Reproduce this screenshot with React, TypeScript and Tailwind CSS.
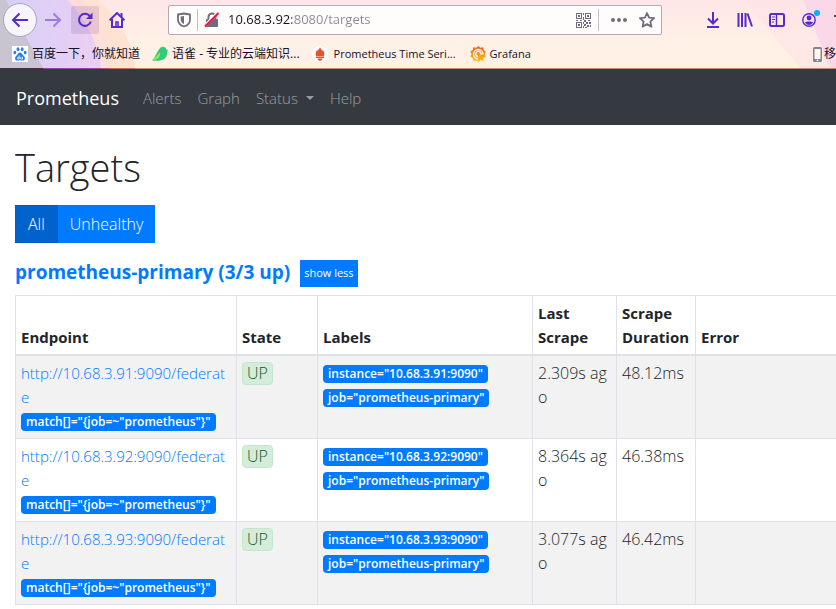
import type { ReactNode } from 'react';
import clsx from 'clsx';

const targets = [
  { host: '10.68.3.91:9090', lastScrape: '2.309s ago', duration: '48.12ms' },
  { host: '10.68.3.92:9090', lastScrape: '8.364s ago', duration: '46.38ms' },
  { host: '10.68.3.93:9090', lastScrape: '3.077s ago', duration: '46.42ms' },
];

const columns = [
  { title: 'Endpoint', width: 'w-[221px]' },
  { title: 'State', width: 'w-[81px]' },
  { title: 'Labels', width: 'w-[215px]' },
  { title: 'Last Scrape', width: 'w-[84px]' },
  { title: 'Scrape Duration', width: 'w-[79px]' },
  { title: 'Error', width: '' },
];

function IconButton({ label, className, children }: { label: string; className?: string; children: ReactNode }) {
  return (
    <button type="button" aria-label={label} className={clsx('flex shrink-0 items-center justify-center', className)}>
      {children}
    </button>
  );
}

// Colour bands of the browser theme
function ThemeBackdrop() {
  return (
    <svg className="absolute inset-0 h-full w-full" viewBox="0 0 836 69" preserveAspectRatio="none" aria-hidden="true">
      <defs>
        <linearGradient id="warm" x1="0" y1="0" x2="0" y2="1">
          <stop offset="0" stopColor="#ffe6e8" />
          <stop offset="0.6" stopColor="#fff0e6" />
          <stop offset="1" stopColor="#fff1e4" />
        </linearGradient>
        <linearGradient id="lilac" x1="0" y1="0" x2="1" y2="0">
          <stop offset="0" stopColor="#d5cff8" />
          <stop offset="1" stopColor="#eccff2" />
        </linearGradient>
        <linearGradient id="peach" x1="0" y1="0" x2="1" y2="0">
          <stop offset="0" stopColor="#fbd0e6" />
          <stop offset="1" stopColor="#ffe0d8" />
        </linearGradient>
      </defs>
      <rect width="836" height="68" fill="url(#warm)" />
      <path d="M0 0H98C122 20 132 44 135 68H0Z" fill="#ffe2d2" />
      <path d="M0 0H82C101 20 109 44 110 68H0Z" fill="url(#peach)" />
      <path d="M0 0H68C86 20 98 44 101 68H0Z" fill="url(#lilac)" />
      <path d="M0 0H6L43 68H0Z" fill="#c8c5d0" />
      <path d="M803 0H836V68H830Z" fill="#fbd8e8" />
      <path d="M745 0H803L830 68H800Z" fill="#ffe3e6" opacity="0.6" />
      <rect y="68" width="836" height="1" fill="#b98f7b" />
      <rect y="68" width="135" height="1" fill="#b9735f" />
      <rect y="68" width="110" height="1" fill="#b0567c" />
      <rect y="68" width="101" height="1" fill="#8a4fa0" />
      <rect y="68" width="43" height="1" fill="#4a3149" />
    </svg>
  );
}

function Toolbar() {
  return (
    <div className="relative flex h-10 items-center text-[#592acb]">
      <IconButton label="Back" className="ml-[3px] size-[34px] rounded-full border border-[#a9a5b4] bg-[#f7f5fc]">
        <svg width="18" height="18" viewBox="0 0 18 18" fill="none" stroke="currentColor" strokeWidth="2">
          <path d="M17 9H2M8.500 2.500 2 9l6.500 6.500" />
        </svg>
      </IconButton>
      <IconButton label="Forward" className="ml-1 size-6 opacity-50">
        <svg width="18" height="18" viewBox="0 0 18 18" fill="none" stroke="currentColor" strokeWidth="2">
          <path d="M1 9h15M9.500 2.500 16 9l-6.500 6.500" />
        </svg>
      </IconButton>
      <IconButton label="Reload" className="ml-1.5 size-7 rounded-xs bg-[#5b2d8a]/15">
        <svg width="16" height="16" viewBox="0 0 16 16" fill="none" stroke="currentColor" strokeWidth="2">
          <path d="M12.800 4.200A6 6 0 1 0 13.800 9.500" />
          <path d="M15.500 0.500V7H9Z" fill="currentColor" stroke="none" />
        </svg>
      </IconButton>
      <IconButton label="Home" className="ml-1 size-7">
        <svg width="16" height="16" viewBox="0 0 16 16" fill="none" stroke="currentColor" strokeWidth="2">
          <path d="M0.500 8.300 8 1l7.500 7.300" />
          <path d="M3 7v8h10V7M12.500 1v4" />
          <path d="M7 15v-5h2v5" strokeWidth="1.500" />
        </svg>
      </IconButton>

      <div className="ml-[37px] flex h-[30px] min-w-0 flex-1 items-center rounded-xs border border-[#b3a9b8] bg-[#fffcfc] text-[#706b7d]">
        <svg className="ml-2 shrink-0" width="14" height="16" viewBox="0 0 14 16" fill="none" stroke="currentColor" strokeWidth="1.800">
          <path d="M7 1.500 13 2.500V7.500C13 11 10.500 13.500 7 14.500C3.500 13.500 1 11 1 7.500V2.500Z" strokeLinejoin="round" />
          <path d="M7 4V12C5 11 3.700 9.500 3.700 7.500V4.600Z" fill="currentColor" stroke="none" />
        </svg>
        <span className="mx-1.5 h-[22px] w-px shrink-0 bg-[#c5bfcb]" />
        <svg className="shrink-0" width="16" height="16" viewBox="0 0 16 16">
          <path d="M4.500 8V5a3.500 3.500 0 0 1 7 0v3" fill="none" stroke="currentColor" strokeWidth="2" />
          <rect x="2" y="7" width="12" height="8" rx="1" fill="currentColor" />
          <path d="M1 13.500 13.500 1" stroke="#fffcfc" strokeWidth="3" />
          <path d="M1 14.500 14.500 1" stroke="#f5124a" strokeWidth="2.200" />
        </svg>
        <input
          type="text"
          aria-label="Address"
          defaultValue="10.68.3.92:8080/targets"
          className="ml-2 min-w-0 flex-1 bg-transparent bg-[linear-gradient(90deg,#15141a_64px,#8c8797_64px)] bg-clip-text text-[13px] text-transparent outline-none"
        />
        <svg className="shrink-0" width="15" height="15" viewBox="0 0 15 15" fill="currentColor" shapeRendering="crispEdges">
          <path fillRule="evenodd" d="M0 0h6v6H0ZM1 1v4h4V1ZM2 2h2v2H2ZM9 0h6v6H9ZM10 1v4h4V1ZM11 2h2v2h-2ZM0 9h6v6H0ZM1 10v4h4v-4ZM2 11h2v2H2Z" />
          <path d="M7 0h1v2H7ZM7 4h1v3H7ZM0 7h2v1H0ZM4 7h2v1H4ZM8 7h2v2H8ZM12 7h2v1h-2ZM7 9h1v2H7ZM10 9h2v2h-2ZM13 9h2v2h-2ZM8 11h2v2H8ZM11 12h2v2h-2ZM7 13h1v2H7ZM14 12h1v2h-1ZM9 14h2v1H9Z" />
        </svg>
        <span className="ml-[7px] h-[22px] w-px shrink-0 bg-[#c5bfcb]" />
        <IconButton label="Page actions" className="ml-2 size-6">
          <svg width="16" height="4" viewBox="0 0 16 4" fill="currentColor">
            <circle cx="2" cy="2" r="2" />
            <circle cx="8" cy="2" r="2" />
            <circle cx="14" cy="2" r="2" />
          </svg>
        </IconButton>
        <IconButton label="Bookmark this page" className="mr-0.5 ml-1 size-6">
          <svg width="16" height="16" viewBox="0 0 16 16" fill="none" stroke="currentColor" strokeWidth="1.800" strokeLinejoin="round">
            <path d="m8 1 2.100 4.600 5 .6-3.700 3.400 1 5L8 12.100l-4.400 2.500 1-5L.9 6.200l5-.6Z" />
          </svg>
        </IconButton>
      </div>

      <div className="ml-[43px] flex gap-4">
        <IconButton label="Downloads" className="size-4">
          <svg width="14" height="16" viewBox="0 0 14 16" fill="none" stroke="currentColor" strokeWidth="2">
            <path d="M7 0v11M2 6.500l5 5 5-5M1 15h12" />
          </svg>
        </IconButton>
        <IconButton label="Library" className="size-4">
          <svg width="16" height="14" viewBox="0 0 16 14" fill="none" stroke="currentColor" strokeWidth="2">
            <path d="M1.500 0v14M5 0v14M8.500 0v14M10.500 0.500 15 13.500" />
          </svg>
        </IconButton>
        <IconButton label="Sidebars" className="size-4">
          <svg width="16" height="14" viewBox="0 0 16 14" fill="none" stroke="currentColor">
            <rect x="1" y="1" width="14" height="12" rx="1.500" strokeWidth="2" />
            <path d="M7.500 1v12" strokeWidth="1.500" />
            <path d="M3 4h3M3 6.500h3M3 9h2" />
          </svg>
        </IconButton>
        <IconButton label="Account" className="relative size-4">
          <svg width="14" height="14" viewBox="0 0 14 14">
            <circle cx="7" cy="7" r="6.200" fill="none" stroke="currentColor" strokeWidth="1.400" />
            <circle cx="7" cy="5" r="2.400" fill="currentColor" />
            <path d="M3 9.300C4 8.200 10 8.200 11 9.300C10 11.500 8.500 12 7 12S4 11.500 3 9.300Z" fill="currentColor" />
          </svg>
          <span className="absolute -top-0.5 -right-[3px] size-1.5 rounded-full bg-[#00b3f4]" />
        </IconButton>
      </div>
      <span className="mb-2 ml-[17px] h-0.5 w-0.5 bg-[#4c4657]" />
    </div>
  );
}

function Bookmark({ text, className, children }: { text: string; className?: string; children: ReactNode }) {
  return (
    <a href="#" className={clsx('flex shrink-0 items-center whitespace-nowrap', className)}>
      {children}
      <span>{text}</span>
    </a>
  );
}

function BookmarksBar() {
  return (
    <div className="relative flex h-7 items-center overflow-hidden pl-3 text-xs text-[#15102c]">
      <Bookmark text="百度一下，你就知道" className="gap-1">
        <svg width="16" height="16" viewBox="0 0 16 16" fill="#2b7de9">
          <rect width="16" height="16" fill="#fff" />
          <ellipse cx="6" cy="3.200" rx="1.400" ry="2" />
          <ellipse cx="10.200" cy="3.200" rx="1.400" ry="2" />
          <ellipse cx="2.800" cy="6.600" rx="1.400" ry="1.800" />
          <ellipse cx="13.200" cy="6.600" rx="1.400" ry="1.800" />
          <path d="M8 6.500C9.800 6.500 10.300 8.500 11.600 9.700C13.800 11.600 13 14.600 10.800 14.600C9.500 14.600 9 14.200 8 14.200S6.500 14.600 5.200 14.600C3 14.600 2.200 11.600 4.400 9.700C5.700 8.500 6.200 6.500 8 6.500Z" />
          <path d="M7.200 9.500V13H5.700V11.200H7M8.800 10.800V13H10.500V10.800" fill="none" stroke="#fff" strokeWidth="0.800" />
        </svg>
      </Bookmark>
      <Bookmark text="语雀 - 专业的云端知识..." className="ml-3 gap-1">
        <svg width="16" height="16" viewBox="0 0 16 16">
          <path d="M0 14.500C3 12 5 5 8.500 1.500C11 0 14.500 1 14 3.200L16 4C15 5.200 15.500 7 15 9C13.500 14.500 7 15.500 0 14.500Z" fill="#31cc79" />
          <path d="M0 14.500C3 12 5 9 8 6.500C9 10 6 14 0 14.500Z" fill="#93e65c" />
        </svg>
      </Bookmark>
      <Bookmark text="Prometheus Time Seri..." className="ml-3 gap-1.5 text-[11px]">
        <svg width="16" height="16" viewBox="0 0 16 16" fill="#e6522c">
          <circle cx="8" cy="8" r="8" fill="#fff" />
          <path d="M8 1C8.500 3 10 3.500 10 5C10.800 4.600 10.500 4 10.600 3.500C12 5.500 12.700 7 12 10H4C3.300 7 4 5.500 5.400 3.500C5.500 4 5.200 4.600 6 5C6 3.500 7.500 3 8 1Z" />
          <path d="M4 10.500h8V12H4ZM5.500 12.500h5C10.200 14 9 14.800 8 14.800S5.800 14 5.500 12.500Z" />
        </svg>
      </Bookmark>
      <Bookmark text="Grafana" className="ml-3.5 gap-1 text-[11px]">
        <svg width="16" height="16" viewBox="0 0 16 16">
          <defs>
            <linearGradient id="flame" x1="0" y1="0" x2="0" y2="1">
              <stop offset="0" stopColor="#f05a28" />
              <stop offset="1" stopColor="#fbca0a" />
            </linearGradient>
          </defs>
          <path d="m8.500 0 1.800 1.700 3-.5.3 2.600 2.200 2-1 2.200 1 2.500-2.300 1.400-.3 2.600-2.800-.2L8.500 16l-2.200-1.600-3 .6-.4-2.800L.3 10.600 1.500 8 .3 5.500l2.500-1.400.5-2.800 2.900.4Z" fill="url(#flame)" />
          <path d="M13 8.500A4.700 4.700 0 1 0 8 13M11 9A2.700 2.700 0 1 0 8 10.700" fill="none" stroke="#fff1e4" strokeWidth="1.500" />
        </svg>
      </Bookmark>
      <Bookmark text="移" className="ml-auto gap-0.5">
        <svg width="9" height="15" viewBox="0 0 9 15">
          <rect width="9" height="15" rx="1.500" fill="#7d8790" />
          <rect x="1.500" y="2" width="6" height="10" fill="#fff7ef" />
          <circle cx="4.500" cy="13.400" r="0.800" fill="#fff" />
        </svg>
      </Bookmark>
    </div>
  );
}

function Badge({ children }: { children: ReactNode }) {
  return (
    <div className="flex h-6 items-end pb-0.5">
      <span className="h-[18px] rounded bg-[#007bff] px-[5px] text-xs leading-[18px] font-semibold whitespace-nowrap text-white">
        {children}
      </span>
    </div>
  );
}

export default function App() {
  return (
    <div className="min-h-screen overflow-x-hidden bg-white font-['Open_Sans','Noto_Sans_CJK_SC',sans-serif] text-[#212529]">
      <header className="relative pb-px">
        <ThemeBackdrop />
        <Toolbar />
        <BookmarksBar />
      </header>

      <nav className="flex h-14 items-center bg-[#343a40] px-4 pt-0.5 text-[15px] font-light text-white/50">
        <a href="#" className="mr-4 text-lg font-normal text-white">Prometheus</a>
        <a href="#" className="px-2">Alerts</a>
        <a href="#" className="px-2">Graph</a>
        <button type="button" className="flex items-center gap-2 px-2">
          Status
          <span className="border-x-4 border-t-4 border-x-transparent border-t-white/50" />
        </button>
        <a href="#" className="px-2">Help</a>
      </nav>

      <main className="pt-[18px] pl-[15px]">
        <h1 className="text-[38px] leading-[48px] font-light">Targets</h1>

        <div className="mt-3.5 flex font-light text-white">
          <button type="button" className="h-[38px] border border-[#005cbf] bg-[#0062cc] px-3">All</button>
          <button type="button" className="h-[38px] bg-[#007bff] px-3">Unhealthy</button>
        </div>

        <div className="mt-[17px] mb-2 flex h-[27px] items-start gap-2.5">
          <h2 className="text-[19px] leading-6 font-bold">
            <a href="#" className="text-[#007bff]">prometheus-primary (3/3 up)</a>
          </h2>
          <button type="button" className="h-[27px] bg-[#007bff] px-1 text-[11px] text-white">show less</button>
        </div>

        <table className="w-full table-fixed border-collapse border border-r-0 border-[#dee2e6] leading-6">
          <thead>
            <tr>
              {columns.map((col) => (
                <th
                  key={col.title}
                  scope="col"
                  className={clsx('border-r border-b-2 border-[#dee2e6] p-[5px] text-left align-bottom text-[15px] font-bold last:border-r-0', col.width)}
                >
                  {col.title}
                </th>
              ))}
            </tr>
          </thead>
          <tbody className="align-top font-light">
            {targets.map((t) => (
              <tr key={t.host} className="border-b border-[#dee2e6] odd:bg-[#f2f2f2]">
                <td className="border-r border-[#dee2e6] p-[5px] text-[15px] break-all">
                  <a href="#" className="block text-[#007bff]">{`http://${t.host}/federate`}</a>
                  <Badge>{'match[]="{job=~"prometheus"}"'}</Badge>
                </td>
                <td className="border-r border-[#dee2e6] p-[5px]">
                  <span className="inline-block rounded border border-[#c3e6cb] bg-[#d4edda] px-1 leading-[21px] text-[#155724]">UP</span>
                </td>
                <td className="border-r border-[#dee2e6] p-[5px]">
                  <Badge>{`instance="${t.host}"`}</Badge>
                  <Badge>job="prometheus-primary"</Badge>
                </td>
                <td className="border-r border-[#dee2e6] p-[5px] break-all">{t.lastScrape}</td>
                <td className="border-r border-[#dee2e6] p-[5px]">{t.duration}</td>
                <td className="p-[5px]" />
              </tr>
            ))}
          </tbody>
        </table>
      </main>
    </div>
  );
}
